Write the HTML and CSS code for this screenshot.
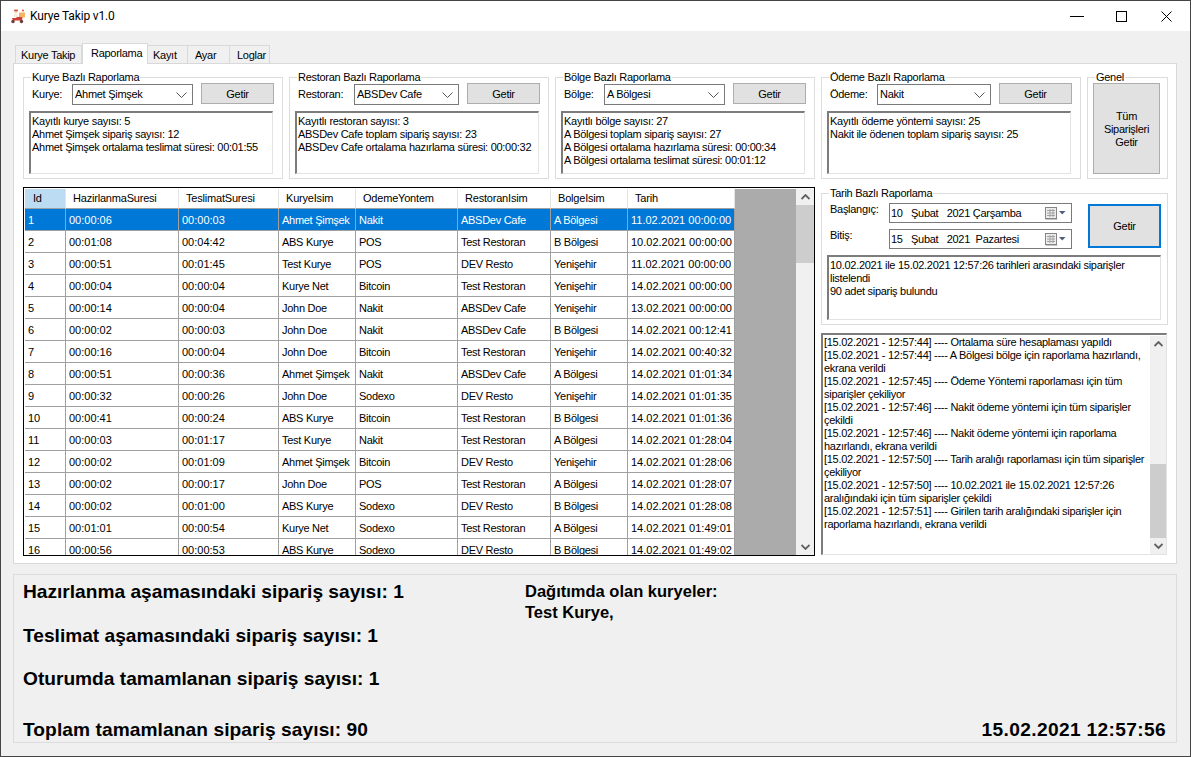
FILE: index.html
```html
<!DOCTYPE html>
<html lang="tr">
<head>
  <meta charset="UTF-8">
  <title>Kurye Takip v1.0</title>
  <link rel="stylesheet" href="styles.css">
</head>
<body>
<div class="window">
  <div class="titlebar">
    <svg class="app-icon" width="16" height="16" viewBox="0 0 16 16">
      <circle cx="14" cy="2.500" r="1" fill="#e5483a"/>
      <circle cx="7" cy="3" r="1.800" fill="#e9b48c"/>
      <path d="M5 1.800h4v1H5z" fill="#c9402c"/>
      <rect x="10" y="4.500" width="6" height="5" fill="#f4b565"/>
      <path d="M5 5.500h3l1.500 3.500H5z" fill="#f7ece2"/>
      <path d="M3 10h4l1-1h4.500l1 .5-.5 3H4z" fill="#cf3c30"/>
      <circle cx="4" cy="13.500" r="1.700" fill="#6a3b3b"/>
      <circle cx="12.500" cy="13.500" r="1.700" fill="#6a3b3b"/>
    </svg>
    <span class="app-title">Kurye Takip v1.0</span>
    <div class="win-controls">
      <div class="win-btn"><svg width="14" height="10" viewBox="0 0 14 10"><path d="M0 5.500h14" stroke="#000"/></svg></div>
      <div class="win-btn"><svg width="11" height="11" viewBox="0 0 11 11"><rect x=".5" y=".5" width="10" height="10" fill="none" stroke="#000"/></svg></div>
      <div class="win-btn"><svg width="11" height="11" viewBox="0 0 11 11"><path d="M.5.5l10 10M10.500.5l-10 10" stroke="#000"/></svg></div>
    </div>
  </div>

  <div class="content">
    <div class="tabs">
      <div class="tab tab-takip">Kurye Takip</div>
      <div class="tab tab-active">Raporlama</div>
      <div class="tab tab-kayit">Kayıt</div>
      <div class="tab tab-ayar">Ayar</div>
      <div class="tab tab-log">Loglar</div>
    </div>

    <div class="tab-panel">
      <div class="report-row">
        <fieldset class="group">
          <legend>Kurye Bazlı Raporlama</legend>
          <div class="pick-row">
            <span class="pick-label w43">Kurye:</span>
            <div class="combo"><span>Ahmet Şimşek</span><svg width="11" height="6" viewBox="0 0 11 6"><path d="M.5.5l5 5 5-5" fill="none" stroke="#555"/></svg></div>
            <div class="btn btn-get">Getir</div>
          </div>
          <div class="textbox report-box">Kayıtlı kurye sayısı: 5
Ahmet Şimşek sipariş sayısı: 12
Ahmet Şimşek ortalama teslimat süresi: 00:01:55</div>
        </fieldset>

        <fieldset class="group">
          <legend>Restoran Bazlı Raporlama</legend>
          <div class="pick-row">
            <span class="pick-label w59">Restoran:</span>
            <div class="combo"><span>ABSDev Cafe</span><svg width="11" height="6" viewBox="0 0 11 6"><path d="M.5.5l5 5 5-5" fill="none" stroke="#555"/></svg></div>
            <div class="btn btn-get">Getir</div>
          </div>
          <div class="textbox report-box">Kayıtlı restoran sayısı: 3
ABSDev Cafe toplam sipariş sayısı: 23
ABSDev Cafe ortalama hazırlama süresi: 00:00:32</div>
        </fieldset>

        <fieldset class="group">
          <legend>Bölge Bazlı Raporlama</legend>
          <div class="pick-row">
            <span class="pick-label w43">Bölge:</span>
            <div class="combo"><span>A Bölgesi</span><svg width="11" height="6" viewBox="0 0 11 6"><path d="M.5.5l5 5 5-5" fill="none" stroke="#555"/></svg></div>
            <div class="btn btn-get">Getir</div>
          </div>
          <div class="textbox report-box">Kayıtlı bölge sayısı: 27
A Bölgesi toplam sipariş sayısı: 27
A Bölgesi ortalama hazırlama süresi: 00:00:34
A Bölgesi ortalama teslimat süresi: 00:01:12</div>
        </fieldset>

        <fieldset class="group">
          <legend>Ödeme Bazlı Raporlama</legend>
          <div class="pick-row">
            <span class="pick-label w50">Ödeme:</span>
            <div class="combo"><span>Nakit</span><svg width="11" height="6" viewBox="0 0 11 6"><path d="M.5.5l5 5 5-5" fill="none" stroke="#555"/></svg></div>
            <div class="btn btn-get">Getir</div>
          </div>
          <div class="textbox report-box">Kayıtlı ödeme yöntemi sayısı: 25
Nakit ile ödenen toplam sipariş sayısı: 25</div>
        </fieldset>

        <fieldset class="group group-general">
          <legend>Genel</legend>
          <div class="btn btn-all">Tüm<br>Siparişleri<br>Getir</div>
        </fieldset>
      </div>

      <div class="lower-row">
        <div class="grid-box">
          <div class="grid-area">
            <table class="orders">
              <colgroup>
                <col class="c-id"><col class="c-haz"><col class="c-tes"><col class="c-kur"><col class="c-ode"><col class="c-res"><col class="c-bol"><col class="c-tar">
              </colgroup>
              <thead>
                <tr><th class="th-current">Id</th><th>HazirlanmaSuresi</th><th>TeslimatSuresi</th><th>KuryeIsim</th><th>OdemeYontem</th><th>RestoranIsim</th><th>BolgeIsim</th><th>Tarih</th></tr>
              </thead>
              <tbody>
                <tr class="row-selected"><td>1</td><td>00:00:06</td><td>00:00:03</td><td>Ahmet Şimşek</td><td>Nakit</td><td>ABSDev Cafe</td><td>A Bölgesi</td><td>11.02.2021 00:00:00</td></tr>
                <tr><td>2</td><td>00:01:08</td><td>00:04:42</td><td>ABS Kurye</td><td>POS</td><td>Test Restoran</td><td>B Bölgesi</td><td>10.02.2021 00:00:00</td></tr>
                <tr><td>3</td><td>00:00:51</td><td>00:01:45</td><td>Test Kurye</td><td>POS</td><td>DEV Resto</td><td>Yenişehir</td><td>11.02.2021 00:00:00</td></tr>
                <tr><td>4</td><td>00:00:04</td><td>00:00:04</td><td>Kurye Net</td><td>Bitcoin</td><td>Test Restoran</td><td>Yenişehir</td><td>14.02.2021 00:00:00</td></tr>
                <tr><td>5</td><td>00:00:14</td><td>00:00:04</td><td>John Doe</td><td>Nakit</td><td>ABSDev Cafe</td><td>Yenişehir</td><td>13.02.2021 00:00:00</td></tr>
                <tr><td>6</td><td>00:00:02</td><td>00:00:03</td><td>John Doe</td><td>Nakit</td><td>ABSDev Cafe</td><td>B Bölgesi</td><td>14.02.2021 00:12:41</td></tr>
                <tr><td>7</td><td>00:00:16</td><td>00:00:04</td><td>John Doe</td><td>Bitcoin</td><td>Test Restoran</td><td>Yenişehir</td><td>14.02.2021 00:40:32</td></tr>
                <tr><td>8</td><td>00:00:51</td><td>00:00:36</td><td>Ahmet Şimşek</td><td>Nakit</td><td>ABSDev Cafe</td><td>A Bölgesi</td><td>14.02.2021 01:01:34</td></tr>
                <tr><td>9</td><td>00:00:32</td><td>00:00:26</td><td>John Doe</td><td>Sodexo</td><td>DEV Resto</td><td>Yenişehir</td><td>14.02.2021 01:01:35</td></tr>
                <tr><td>10</td><td>00:00:41</td><td>00:00:24</td><td>ABS Kurye</td><td>Bitcoin</td><td>Test Restoran</td><td>B Bölgesi</td><td>14.02.2021 01:01:36</td></tr>
                <tr><td>11</td><td>00:00:03</td><td>00:01:17</td><td>Test Kurye</td><td>Nakit</td><td>Test Restoran</td><td>A Bölgesi</td><td>14.02.2021 01:28:04</td></tr>
                <tr><td>12</td><td>00:00:02</td><td>00:01:09</td><td>Ahmet Şimşek</td><td>Bitcoin</td><td>DEV Resto</td><td>Yenişehir</td><td>14.02.2021 01:28:06</td></tr>
                <tr><td>13</td><td>00:00:02</td><td>00:00:17</td><td>John Doe</td><td>POS</td><td>Test Restoran</td><td>A Bölgesi</td><td>14.02.2021 01:28:07</td></tr>
                <tr><td>14</td><td>00:00:02</td><td>00:01:00</td><td>ABS Kurye</td><td>Sodexo</td><td>DEV Resto</td><td>B Bölgesi</td><td>14.02.2021 01:28:08</td></tr>
                <tr><td>15</td><td>00:01:01</td><td>00:00:54</td><td>Kurye Net</td><td>Sodexo</td><td>Test Restoran</td><td>A Bölgesi</td><td>14.02.2021 01:49:01</td></tr>
                <tr><td>16</td><td>00:00:56</td><td>00:00:53</td><td>ABS Kurye</td><td>Sodexo</td><td>DEV Resto</td><td>B Bölgesi</td><td>14.02.2021 01:49:02</td></tr>
              </tbody>
            </table>
          </div>
          <div class="scrollbar">
            <div class="sb-arrow"><svg width="9" height="6" viewBox="0 0 9 6"><path d="M.5 5l4-4 4 4" fill="none" stroke="#606060" stroke-width="1.8"/></svg></div>
            <div class="sb-thumb sb-thumb-grid"></div>
            <div class="sb-track"></div>
            <div class="sb-arrow"><svg width="9" height="6" viewBox="0 0 9 6"><path d="M.5 1l4 4 4-4" fill="none" stroke="#606060" stroke-width="1.8"/></svg></div>
          </div>
        </div>

        <div class="side-col">
          <fieldset class="group group-date">
            <legend>Tarih Bazlı Raporlama</legend>
            <div class="date-top">
              <div class="date-rows">
                <div class="date-row">
                  <span class="date-label">Başlangıç:</span>
                  <div class="date-picker"><span class="date-text">10   Şubat   2021 Çarşamba</span>
                    <svg width="22" height="13" viewBox="0 0 22 13"><rect x="1.500" y=".5" width="11" height="11" fill="#ededed" stroke="#858585"/><path d="M3 3.500h8M3 6h8M3 8.500h8M6 2v8M9 2v8" stroke="#a2a2a2"/><path d="M13.500 12.500h-12" stroke="#c4c4c4"/><path d="M15 4h6.500l-3.250 3.500z" fill="#4f5d7a"/></svg>
                  </div>
                </div>
                <div class="date-row">
                  <span class="date-label">Bitiş:</span>
                  <div class="date-picker"><span class="date-text">15   Şubat   2021  Pazartesi</span>
                    <svg width="22" height="13" viewBox="0 0 22 13"><rect x="1.500" y=".5" width="11" height="11" fill="#ededed" stroke="#858585"/><path d="M3 3.500h8M3 6h8M3 8.500h8M6 2v8M9 2v8" stroke="#a2a2a2"/><path d="M13.500 12.500h-12" stroke="#c4c4c4"/><path d="M15 4h6.500l-3.250 3.500z" fill="#4f5d7a"/></svg>
                  </div>
                </div>
              </div>
              <div class="btn btn-date">Getir</div>
            </div>
            <div class="textbox date-box">10.02.2021 ile 15.02.2021 12:57:26 tarihleri arasındaki siparişler
listelendi
90 adet sipariş bulundu</div>
          </fieldset>

          <div class="textbox log-box">
            <div class="log-text">[15.02.2021 - 12:57:44] ---- Ortalama süre hesaplaması yapıldı
[15.02.2021 - 12:57:44] ---- A Bölgesi bölge için raporlama hazırlandı,
ekrana verildi
[15.02.2021 - 12:57:45] ---- Ödeme Yöntemi raporlaması için tüm
siparişler çekiliyor
[15.02.2021 - 12:57:46] ---- Nakit ödeme yöntemi için tüm siparişler
çekildi
[15.02.2021 - 12:57:46] ---- Nakit ödeme yöntemi için raporlama
hazırlandı, ekrana verildi
[15.02.2021 - 12:57:50] ---- Tarih aralığı raporlaması için tüm siparişler
çekiliyor
[15.02.2021 - 12:57:50] ---- 10.02.2021 ile 15.02.2021 12:57:26
aralığındaki için tüm siparişler çekildi
[15.02.2021 - 12:57:51] ---- Girilen tarih aralığındaki siparişler için
raporlama hazırlandı, ekrana verildi</div>
            <div class="scrollbar scrollbar-log">
              <div class="sb-arrow"><svg width="9" height="6" viewBox="0 0 9 6"><path d="M.5 5l4-4 4 4" fill="none" stroke="#606060" stroke-width="1.8"/></svg></div>
              <div class="sb-track"></div>
              <div class="sb-thumb sb-thumb-log"></div>
              <div class="sb-arrow"><svg width="9" height="6" viewBox="0 0 9 6"><path d="M.5 1l4 4 4-4" fill="none" stroke="#606060" stroke-width="1.8"/></svg></div>
            </div>
          </div>
        </div>
      </div>
    </div>

    <div class="status-panel">
      <div class="status-left">
        <div class="stat">Hazırlanma aşamasındaki sipariş sayısı: 1</div>
        <div class="stat stat-2">Teslimat aşamasındaki sipariş sayısı: 1</div>
        <div class="stat stat-3">Oturumda tamamlanan sipariş sayısı: 1</div>
        <div class="stat stat-4">Toplam tamamlanan sipariş sayısı: 90</div>
      </div>
      <div class="status-right">
        <div class="couriers">Dağıtımda olan kuryeler:<br>Test Kurye,</div>
        <div class="stat clock">15.02.2021 12:57:56</div>
      </div>
    </div>
  </div>
</div>
</body>
</html>
```

FILE: styles.css
```css
* { box-sizing: border-box; }
html, body { margin: 0; height: 100%; overflow: hidden; }
body { font-family: "Liberation Sans", Arial, sans-serif; font-size: 11px; line-height: 13px; letter-spacing: -0.28px; color: #000; }

.window { width: 100vw; height: 100vh; border: 1px solid #454545; background: #f0f0f0; display: flex; flex-direction: column; }

.titlebar { height: 30px; background: #fff; display: flex; align-items: center; padding-left: 8px; flex: none; }
.app-icon { margin-right: 5px; }
.app-title { font-family: Roboto, sans-serif; font-size: 12px; letter-spacing: -0.15px; }
.win-controls { margin-left: auto; display: flex; margin-right: 1px; }
.win-btn { width: 45px; height: 30px; display: flex; align-items: center; justify-content: center; }

.content { flex: 1; padding: 12px 13px 0 12px; display: flex; flex-direction: column; }

.tabs { display: flex; align-items: flex-end; height: 20px; padding-left: 2px; flex: none; }
.tab { height: 18px; border: 1px solid #d9d9d9; border-bottom: 0; border-left: 0; padding: 3px 0 0 5px; background: #f0f0f0; }
.tab-takip { width: 67px; border-left: 1px solid #d9d9d9; }
.tab-active { width: 66px; height: 21px; margin-bottom: -1px; padding: 3px 0 0 8px; background: #fff; border-left: 1px solid #d9d9d9; position: relative; z-index: 1; }
.tab-kayit { width: 40px; }
.tab-ayar { width: 42px; padding-left: 7px; }
.tab-log { width: 40px; padding-left: 7px; }

.tab-panel { height: 501px; flex: none; background: #fff; border: 1px solid #d9d9d9; padding: 7px 8px 7px 9px; }

.report-row { display: flex; gap: 6px; height: 108px; }
.group { margin: 0; min-width: 0; width: 260px; border: 1px solid #dcdcdc; padding: 0 8px 4px 5px; }
.group legend { margin-left: 2px; padding: 0 1px; line-height: 12px; }

.pick-row { display: flex; gap: 8px; align-items: flex-start; height: 22px; }
.pick-label { flex: none; padding: 5px 0 0 3px; }
.pick-label.w43 { width: 35px; }
.pick-label.w50 { width: 42px; }
.pick-label.w59 { width: 51px; }
.combo { flex: 1; min-width: 0; height: 21px; margin-top: 1px; border: 1px solid #7a7a7a; background: #fff; display: flex; align-items: center; justify-content: space-between; padding: 0 5px 0 2px; }
.btn { background: #e1e1e1; border: 1px solid #adadad; display: flex; align-items: center; justify-content: center; text-align: center; flex: none; }
.btn-get { width: 73px; height: 21px; padding-top: 1px; }

.textbox { background: #fff; border-style: solid; border-width: 2px 1px 1px 2px; border-color: #7c7c7c #e3e3e3 #e3e3e3 #7c7c7c; white-space: pre; overflow: hidden; }
.report-box { width: 244px; height: 63px; margin-top: 6px; padding: 2px 0 0 1px; }

.group-general { width: 81px; padding-right: 6px; }
.btn-all { width: 67px; height: 91px; padding-top: 1px; }

.lower-row { display: flex; gap: 6px; margin-top: 8px; height: 369px; }

.grid-box { width: 792px; flex: none; display: flex; border: 1px solid #000; padding: 1px 0 0 1px; background: #fff; overflow: hidden; }
.grid-area { flex: 1; min-width: 0; background: #ababab; overflow: hidden; }

.orders { table-layout: fixed; width: 710px; border-collapse: separate; border-spacing: 0; background: #fff; }
.c-id { width: 41px; }
.c-haz { width: 113px; }
.c-tes { width: 100px; }
.c-kur { width: 77px; }
.c-ode { width: 102px; }
.c-res { width: 93px; }
.c-bol { width: 77px; }
.c-tar { width: 107px; }
.orders th { height: 20px; padding: 0 0 0 7px; font-weight: normal; text-align: left; letter-spacing: -0.2px; border-right: 1px solid #e4e4e4; border-bottom: 1px solid #a0a0a0; white-space: nowrap; overflow: hidden; }
.orders th.th-current { background: #bcdcf4; padding-left: 8px; }
.orders td { height: 22px; padding: 1px 0 0 3px; border-right: 1px solid #a0a0a0; border-bottom: 1px solid #a0a0a0; white-space: nowrap; overflow: hidden; }
.orders td:nth-child(1), .orders td:nth-child(2), .orders td:nth-child(3), .orders td:nth-child(8) { letter-spacing: 0; }
.row-selected td { background: #0078d7; color: #fff; }

.scrollbar { width: 18px; flex: none; background: #f0f0f0; display: flex; flex-direction: column; }
.sb-arrow { height: 16px; flex: none; display: flex; align-items: center; justify-content: center; }
.sb-track { flex: 1; }
.sb-thumb { background: #cdcdcd; flex: none; }
.sb-thumb-grid { height: 58px; }
.sb-thumb-log { height: 74px; }

.side-col { width: 347px; flex: none; display: flex; flex-direction: column; }
.group-date { width: 100%; height: 138px; padding: 4px 6px 4px 5px; }
.date-top { display: flex; justify-content: space-between; }
.date-rows { display: flex; flex-direction: column; gap: 6px; }
.date-row { display: flex; }
.date-label { width: 62px; padding: 0 0 0 3px; flex: none; }
.date-picker { width: 183px; height: 20px; border: 1px solid #7a7a7a; display: flex; align-items: center; justify-content: space-between; padding: 0 5px 0 1px; }
.date-text { white-space: pre; }
.btn-date { width: 73px; height: 44px; margin-top: 1px; border: 2px solid #0078d7; }
.date-box { height: 65px; margin-top: 6px; padding: 2px 0 0 1px; }

.log-box { height: 222px; margin-top: 8px; margin-right: 1px; display: flex; padding-top: 1px; white-space: normal; }
.log-text { flex: 1; white-space: pre; padding-left: 1px; }
.scrollbar-log { width: 16px; }

.status-panel { height: 169px; margin-top: 10px; border: 1px solid #dcdcdc; padding: 6px 10px 0 9px; display: flex; flex: none; }
.status-left { width: 502px; flex: none; }
.stat { font-size: 19.15px; font-weight: bold; line-height: 22px; letter-spacing: 0; white-space: nowrap; }
.stat-2 { margin-top: 22px; }
.stat-3 { margin-top: 21px; }
.stat-4 { margin-top: 29px; letter-spacing: 0.08px; }
.status-right { flex: 1; display: flex; flex-direction: column; justify-content: space-between; padding-bottom: 1px; }
.couriers { font-size: 16.5px; font-weight: bold; line-height: 20.5px; letter-spacing: 0; }
.clock { text-align: right; letter-spacing: 0.35px; }
```
